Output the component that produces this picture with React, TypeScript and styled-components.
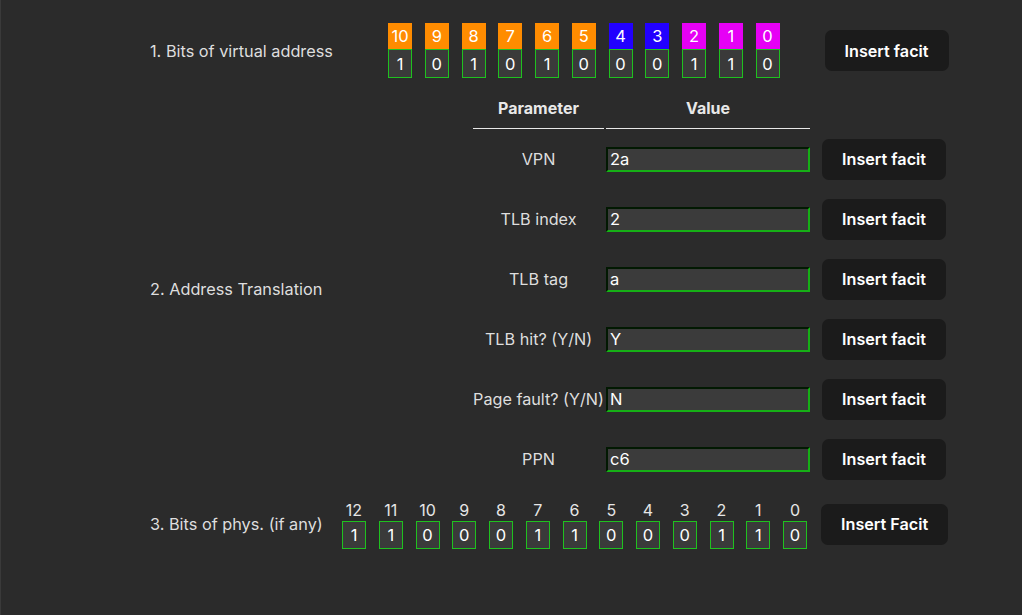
import React from "react";
import styled, { createGlobalStyle } from "styled-components";

const GlobalStyle = createGlobalStyle`
  html, body {
    margin: 0;
    padding: 0;
    background: #2b2b2b;
  }
  body {
    font-family: Inter, "Noto Sans", sans-serif;
    color: #dedede;
  }
`;

const Page = styled.div`
  min-height: 615px;
  box-sizing: border-box;
  border-left: 1px solid #3a3a3a;
  padding: 23px 0 0 149px;
`;

const Section = styled.div<{ $pad?: number }>`
  display: flex;
  align-items: center;
  padding-top: ${(p) => p.$pad ?? 0}px;
`;

const Label = styled.div<{ $width: number }>`
  width: ${(p) => p.$width}px;
  flex: none;
  font-size: 16.3px;
  color: #dedede;
`;

const BitRow = styled.div`
  display: flex;
  gap: 12.75px;
`;

const BitColumn = styled.div`
  display: flex;
  flex-direction: column;
  width: 24px;
`;

const BitHead = styled.div<{ $color: string }>`
  height: 26px;
  background: ${(p) => p.$color};
  color: #fff;
  font-size: 16.5px;
  display: flex;
  align-items: center;
  justify-content: center;
`;

const BitIndex = styled.div`
  height: 22px;
  color: #e6e6e6;
  font-size: 16px;
  display: flex;
  align-items: center;
  justify-content: center;
`;

const BitBox = styled.div<{ $height: number }>`
  height: ${(p) => p.$height}px;
  box-sizing: border-box;
  border: 1px solid #1fc11f;
  background: #3a3a3a;
  color: #fff;
  font-size: 16.5px;
  display: flex;
  align-items: center;
  justify-content: center;
`;

const FacitButton = styled.button<{ $offset: number }>`
  margin-left: ${(p) => p.$offset}px;
  height: 41px;
  padding: 0 20px;
  border: none;
  border-radius: 7px;
  background: #1b1b1b;
  color: #fff;
  font-family: Inter, "Noto Sans", sans-serif;
  font-size: 16.2px;
  font-weight: 600;
  cursor: pointer;
`;

const Table = styled.div`
  display: grid;
  grid-template-columns: 131px 204px auto;
  column-gap: 2px;
  align-items: center;
`;

const HeadCell = styled.div`
  height: 40px;
  border-bottom: 1px solid #e8e8e8;
  display: flex;
  align-items: center;
  justify-content: center;
  font-weight: 700;
  font-size: 16px;
  color: #e8e8e8;
`;

const ParamCell = styled.div`
  height: 60px;
  display: flex;
  align-items: center;
  justify-content: center;
  font-size: 16.2px;
  white-space: nowrap;
`;

const ValueInput = styled.input`
  width: 204px;
  height: 25px;
  box-sizing: border-box;
  border: 2px inset #16b016;
  border-top-color: #0c6e0c;
  border-left-color: #0c6e0c;
  background: #3b3b3b;
  color: #fff;
  font-family: Inter, "Noto Sans", sans-serif;
  font-size: 16.5px;
  padding: 0 2px;
  outline: none;
`;

const virtualBits = [
  { i: 10, v: 1, c: "#ff8c00" },
  { i: 9, v: 0, c: "#ff8c00" },
  { i: 8, v: 1, c: "#ff8c00" },
  { i: 7, v: 0, c: "#ff8c00" },
  { i: 6, v: 1, c: "#ff8c00" },
  { i: 5, v: 0, c: "#ff8c00" },
  { i: 4, v: 0, c: "#2200ff" },
  { i: 3, v: 0, c: "#2200ff" },
  { i: 2, v: 1, c: "#e600f5" },
  { i: 1, v: 1, c: "#e600f5" },
  { i: 0, v: 0, c: "#e600f5" },
];

const physBits = [1, 1, 0, 0, 0, 1, 1, 0, 0, 0, 1, 1, 0];

const params = [
  { name: "VPN", value: "2a" },
  { name: "TLB index", value: "2" },
  { name: "TLB tag", value: "a" },
  { name: "TLB hit? (Y/N)", value: "Y" },
  { name: "Page fault? (Y/N)", value: "N" },
  { name: "PPN", value: "c6" },
];

export default function App() {
  return (
    <>
      <GlobalStyle />
      <Page>
        <Section>
          <Label $width={238}>1. Bits of virtual address</Label>
          <BitRow>
            {virtualBits.map((b) => (
              <BitColumn key={b.i}>
                <BitHead $color={b.c}>{b.i}</BitHead>
                <BitBox $height={29}>{b.v}</BitBox>
              </BitColumn>
            ))}
          </BitRow>
          <FacitButton $offset={45}>Insert facit</FacitButton>
        </Section>

        <Section $pad={10}>
          <Label $width={323}>2. Address Translation</Label>
          <Table>
            <HeadCell>Parameter</HeadCell>
            <HeadCell>Value</HeadCell>
            <div />
            {params.map((p) => (
              <React.Fragment key={p.name}>
                <ParamCell>{p.name}</ParamCell>
                <ValueInput defaultValue={p.value} />
                <FacitButton $offset={10}>Insert facit</FacitButton>
              </React.Fragment>
            ))}
          </Table>
        </Section>

        <Section $pad={10}>
          <Label $width={192}>3. Bits of phys. (if any)</Label>
          <BitRow>
            {physBits.map((v, k) => (
              <BitColumn key={k}>
                <BitIndex>{12 - k}</BitIndex>
                <BitBox $height={28}>{v}</BitBox>
              </BitColumn>
            ))}
          </BitRow>
          <FacitButton $offset={14}>Insert Facit</FacitButton>
        </Section>
      </Page>
    </>
  );
}
